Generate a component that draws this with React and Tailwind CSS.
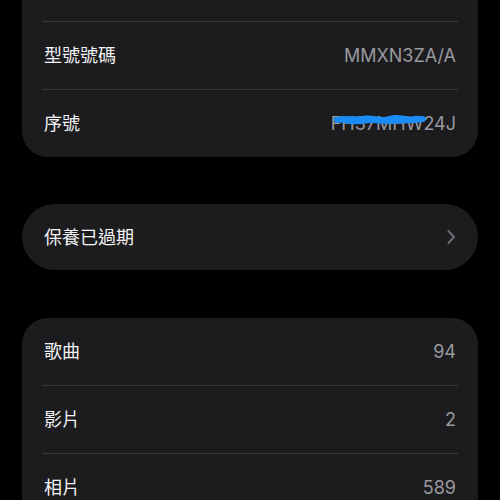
const FONT = { fontFamily: 'Inter, "Noto Sans CJK TC", sans-serif' };

const Sep = () => <div className="h-px mx-[20px] bg-[#38383a]" />;

function Row({ label, value, children }) {
  return (
    <div className="h-[67px] flex items-center justify-between px-[22px]">
      <span className="text-[18px] text-[#f2f2f7]">{label}</span>
      {children || <span className="text-[18px] text-[#98989f]">{value}</span>}
    </div>
  );
}

function Serial() {
  return (
    <span className="relative text-[18px] text-[#98989f]">
      FH37MHW24J
      <svg className="absolute left-[2px] top-[2px]" width="94" height="16" viewBox="0 0 94 16">
        <path
          d="M1 6 C10 2 20 6 30 4 C40 2 46 7 56 4 C66 1 74 6 82 4 C86 3 90 5 92 7 C88 10 80 9 72 10 C62 11 56 13 46 11 C36 10 28 13 18 12 C10 11 4 10 1 6 Z"
          fill="#1a8cf5"
        />
        <path d="M4 8 C26 5 54 12 90 7" stroke="#1a8cf5" strokeWidth="6" fill="none" strokeLinecap="round" />
      </svg>
    </span>
  );
}

export default function App() {
  return (
    <div className="w-[500px] h-[500px] bg-black overflow-hidden" style={FONT}>
      <div className="mx-[22px] bg-[#1c1c1e] rounded-b-[26px]">
        <div className="h-[21px]" />
        <Sep />
        <Row label="型號號碼" value="MMXN3ZA/A" />
        <Sep />
        <Row label="序號"><Serial /></Row>
      </div>

      <div className="mx-[22px] mt-[47px] h-[66px] bg-[#1c1c1e] rounded-full flex items-center justify-between px-[22px]">
        <span className="text-[18px] text-[#f2f2f7]">保養已過期</span>
        <svg width="10" height="16" viewBox="0 0 10 16" fill="none" stroke="#6c6c70" strokeWidth="2" strokeLinecap="round" strokeLinejoin="round">
          <path d="M2.5 2 L8 8 L2.5 14" />
        </svg>
      </div>

      <div className="mx-[22px] mt-[48px] bg-[#1c1c1e] rounded-t-[26px]">
        <Row label="歌曲" value="94" />
        <Sep />
        <Row label="影片" value="2" />
        <Sep />
        <Row label="相片" value="589" />
      </div>
    </div>
  );
}
